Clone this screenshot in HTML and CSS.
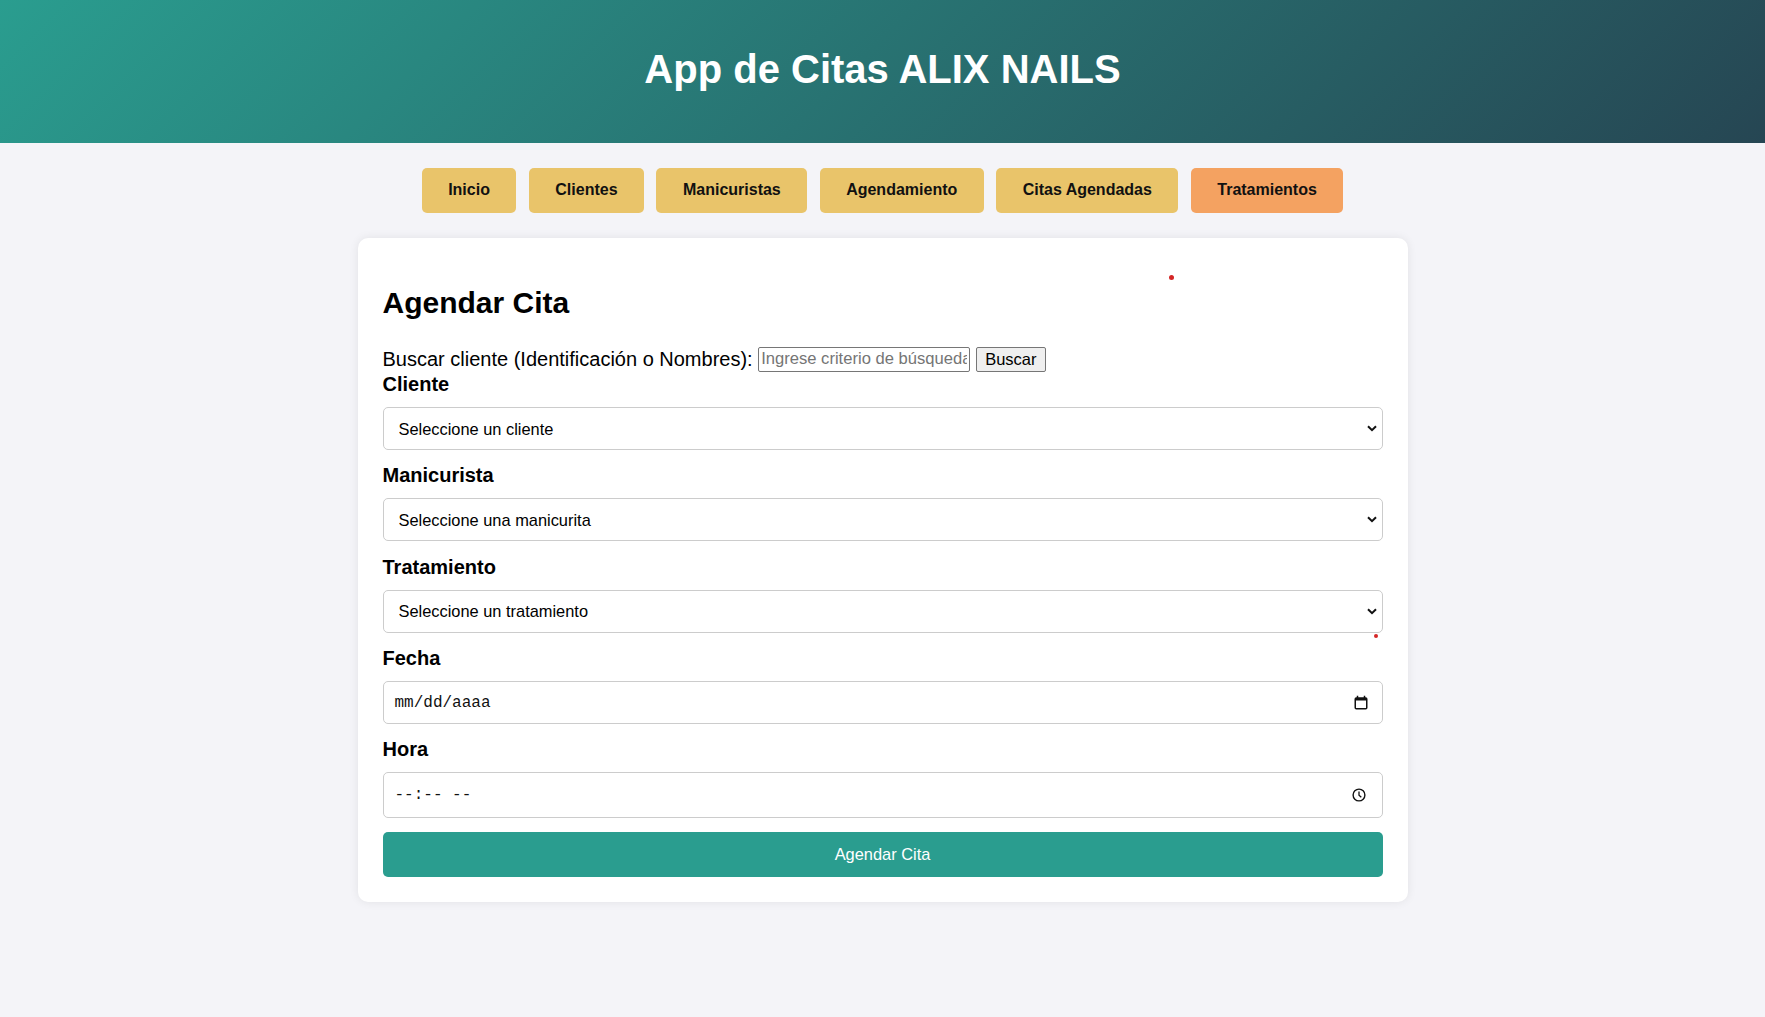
FILE: index.html
```html
<!DOCTYPE html>
<html lang="es">
<head>
<meta charset="utf-8">
<title>App de Citas ALIX NAILS</title>
<link rel="stylesheet" href="styles.css">
</head>
<body>
<header class="header">
  <h1 class="title">App de Citas ALIX NAILS</h1>
</header>
<nav class="nav">
  <a class="nav-btn">Inicio</a>
  <a class="nav-btn">Clientes</a>
  <a class="nav-btn">Manicuristas</a>
  <a class="nav-btn">Agendamiento</a>
  <a class="nav-btn">Citas Agendadas</a>
  <a class="nav-btn nav-btn-active">Tratamientos</a>
</nav>
<main class="card">
  <span class="dot dot-a"></span>
  <span class="dot dot-b"></span>
  <h2 class="card-title">Agendar Cita</h2>
  <div class="search">
    <span class="search-label">Buscar cliente (Identificación o Nombres):</span>
    <input class="search-input" type="text" placeholder="Ingrese criterio de búsqueda">
    <button class="search-btn" type="button">Buscar</button>
  </div>
  <label class="field-label">Cliente</label>
  <div class="select-wrap">
    <select class="select"><option>Seleccione un cliente</option></select>
    <svg class="chevron" width="10" height="7" viewBox="0 0 10 7"><path d="M1 1.2 L5 5.2 L9 1.2" fill="none" stroke="#111" stroke-width="2"/></svg>
  </div>
  <label class="field-label">Manicurista</label>
  <div class="select-wrap">
    <select class="select"><option>Seleccione una manicurita</option></select>
    <svg class="chevron" width="10" height="7" viewBox="0 0 10 7"><path d="M1 1.2 L5 5.2 L9 1.2" fill="none" stroke="#111" stroke-width="2"/></svg>
  </div>
  <label class="field-label">Tratamiento</label>
  <div class="select-wrap">
    <select class="select"><option>Seleccione un tratamiento</option></select>
    <svg class="chevron" width="10" height="7" viewBox="0 0 10 7"><path d="M1 1.2 L5 5.2 L9 1.2" fill="none" stroke="#111" stroke-width="2"/></svg>
  </div>
  <label class="field-label">Fecha</label>
  <div class="fake-input fake-date">
    <span class="fake-text">mm/dd/aaaa</span>
    <svg class="cal-icon" width="14" height="15" viewBox="0 0 14 15"><rect x="1.25" y="3" width="11.5" height="10.75" rx="1" fill="none" stroke="#111" stroke-width="1.5"/><rect x="1.25" y="3" width="11.5" height="2.5" fill="#111"/><path d="M3.5 0.8 V3 M10.5 0.8 V3" stroke="#111" stroke-width="1.5"/></svg>
  </div>
  <label class="field-label">Hora</label>
  <div class="fake-input fake-time">
    <span class="fake-text">--:-- --</span>
    <svg class="clock-icon" width="14" height="14" viewBox="0 0 14 14"><circle cx="7" cy="7" r="5.9" fill="none" stroke="#111" stroke-width="1.4"/><path d="M7 3.6 V7.2 L9.3 9.3" fill="none" stroke="#111" stroke-width="1.3"/></svg>
  </div>
  <button class="submit" type="button">Agendar Cita</button>
</main>
</body>
</html>
```
FILE: styles.css
```css
* {
  box-sizing: border-box;
}

body {
  margin: 0;
  min-height: 100vh;
  background: #f4f4f8;
  font-family: "Liberation Sans", Arial, sans-serif;
  color: #000;
}

.header {
  background: linear-gradient(135deg, #2a9d8f 0%, #264653 100%);
  padding: 46px 20px 51px;
  text-align: center;
}

.title {
  margin: 0;
  color: #fff;
  font-size: 40px;
  line-height: 46px;
  font-weight: bold;
}

.nav {
  display: flex;
  justify-content: center;
  gap: 12.4px;
  padding: 25px 0 25px;
}

.nav-btn {
  display: block;
  background: #e9c46a;
  color: #111;
  font-size: 16px;
  font-weight: bold;
  line-height: 18.5px;
  padding: 13px 26.5px;
  border-radius: 5px;
}

.nav-btn-active {
  background: #f4a261;
}

.card {
  position: relative;
  width: 1050px;
  margin: 0 auto;
  padding: 25px;
  background: #fff;
  border-radius: 10px;
  box-shadow: 0 0 10px rgba(0, 0, 0, 0.08);
}

.dot {
  position: absolute;
  width: 5px;
  height: 5px;
  border-radius: 50%;
  background: #d42626;
}

.dot-a {
  left: 811px;
  top: 37px;
}

.dot-b {
  left: 1016px;
  top: 396px;
  width: 4px;
  height: 4px;
}

.card-title {
  margin: 23px 0 26.5px;
  font-size: 30px;
  line-height: 34.5px;
  font-weight: bold;
}

.search {
  display: flex;
  align-items: center;
  height: 25.6px;
  margin-bottom: 1px;
  font-size: 20px;
}

.search-label {
  margin-right: 5.5px;
}

.search-input {
  width: 212px;
  height: 25px;
  padding: 2px 2px;
  border: 1px solid #767676;
  border-radius: 2px;
  font-family: "Liberation Sans", Arial, sans-serif;
  font-size: 16.6px;
  color: #000;
  margin-right: 5.5px;
}

.search-input::placeholder {
  color: #757575;
}

.search-btn {
  height: 25.6px;
  padding: 0 8.5px;
  background: #efefef;
  border: 1px solid #767676;
  border-radius: 2px;
  font-family: "Liberation Sans", Arial, sans-serif;
  font-size: 16.5px;
  color: #000;
}

.field-label {
  display: block;
  font-size: 20px;
  font-weight: bold;
  line-height: 23px;
  margin-bottom: 11.1px;
}

.select-wrap {
  position: relative;
  margin-bottom: 14.2px;
}

.select {
  display: block;
  width: 100%;
  height: 43px;
  padding: 0 15px;
  -webkit-appearance: none;
  appearance: none;
  background: #fff;
  border: 1px solid #ccc;
  border-radius: 5px;
  font-family: "Liberation Sans", Arial, sans-serif;
  font-size: 16.4px;
  color: #000;
}

.chevron {
  position: absolute;
  right: 5.5px;
  top: 18px;
}

.fake-input {
  display: flex;
  align-items: center;
  justify-content: space-between;
  width: 100%;
  border: 1px solid #ccc;
  border-radius: 5px;
  padding: 0 14px 0 11px;
  background: #fff;
  margin-bottom: 14px;
}

.fake-date {
  height: 43.3px;
}

.fake-time {
  height: 46px;
  padding-right: 15.5px;
  margin-bottom: 13.8px;
}

.fake-text {
  font-family: "Liberation Mono", "DejaVu Sans Mono", monospace;
  font-size: 16px;
  white-space: pre;
  color: #111;
}

.cal-icon {
  display: block;
  margin-top: -1px;
}

.clock-icon {
  display: block;
}

.submit {
  display: block;
  width: 100%;
  padding: 13px;
  border: none;
  border-radius: 5px;
  background: #2a9d8f;
  color: #fff;
  font-family: "Liberation Sans", Arial, sans-serif;
  font-size: 16.4px;
  line-height: 18.6px;
}
```
